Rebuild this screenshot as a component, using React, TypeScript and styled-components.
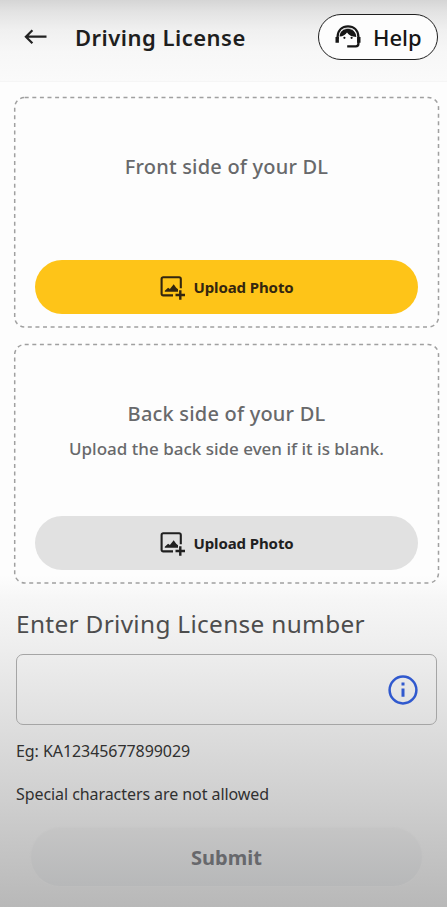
import React from "react";
import styled, { createGlobalStyle } from "styled-components";

const GlobalStyle = createGlobalStyle`
  *, *::before, *::after { box-sizing: border-box; }
  body {
    margin: 0;
    background: #fdfdfd;
    font-family: "Noto Sans", "Open Sans", sans-serif;
  }
  button, input { font-family: inherit; }
`;

const Screen = styled.div`
  width: 447px;
  height: 907px;
  overflow: hidden;
  display: flex;
  flex-direction: column;
  background: linear-gradient(
    180deg,
    #fdfdfd 0,
    #fdfdfd 575px,
    #f6f6f6 600px,
    #eeeeee 645px,
    #dedede 725px,
    #cecece 805px,
    #c0c0c0 870px,
    #b8b8b8 907px
  );
`;

const Header = styled.header`
  height: 82px;
  flex: none;
  display: flex;
  align-items: flex-start;
  padding: 14px 9px 0 24px;
  background: linear-gradient(180deg, #d5d5d5 0, #e3e3e3 12px, #f0f0f0 30px, #f7f7f7 52px, #fafafa 82px);
  border-bottom: 1px solid #f5f5f5;
`;

const BackButton = styled.button`
  width: 24px;
  height: 45px;
  padding: 0;
  border: 0;
  background: none;
  display: flex;
  align-items: center;
`;

const Title = styled.h1`
  margin: 0 0 0 27px;
  flex: 1;
  font-size: 22px;
  line-height: 47px;
  font-weight: 600;
  letter-spacing: 0.48px;
  color: #1e1e1e;
  white-space: nowrap;
`;

const HelpButton = styled.button`
  width: 120px;
  height: 46px;
  padding: 0 0 0 16px;
  display: flex;
  align-items: center;
  gap: 12px;
  border: 1.6px solid #202020;
  border-radius: 23px;
  background: #fdfdfd;
  color: #161616;
  font-size: 22px;
  font-weight: 500;
  line-height: 30px;
`;

const Main = styled.main`
  display: flex;
  flex-direction: column;
  padding: 15px 9px 0 14px;
`;

const Card = styled.section<{ $height: number; $top: number }>`
  position: relative;
  height: ${(p) => p.$height}px;
  padding: ${(p) => p.$top}px 21px 13px;
  display: flex;
  flex-direction: column;
  align-items: center;
  & + & { margin-top: 17px; }
`;

const Outline = styled.svg`
  position: absolute;
  inset: 0;
  width: 100%;
  height: calc(100% - 0.5px);
  pointer-events: none;
  overflow: visible;
`;

const CardTitle = styled.h2`
  margin: 0;
  padding-left: 1px;
  font-size: 20px;
  line-height: 30px;
  font-weight: 500;
  letter-spacing: 0.2px;
  color: #68696b;
  white-space: nowrap;
`;

const CardNote = styled.p`
  margin: 8px 0 0;
  padding-left: 1px;
  font-size: 17px;
  line-height: 24px;
  font-weight: 500;
  color: #68696b;
  white-space: nowrap;
`;

const UploadButton = styled.button<{ $primary?: boolean }>`
  width: 383px;
  height: 54px;
  margin-top: auto;
  padding: 0 0 0 2px;
  display: flex;
  align-items: center;
  justify-content: center;
  gap: 8px;
  border: 0;
  border-radius: 27px;
  background: ${(p) => (p.$primary ? "#fec418" : "#e1e1e1")};
  color: ${(p) => (p.$primary ? "#33260f" : "#202020")};
  font-size: 15px;
  font-weight: 700;
  letter-spacing: -0.1px;
  line-height: 22px;
`;

const Form = styled.form`
  display: flex;
  flex-direction: column;
  padding: 23px 0 0 2px;
`;

const Label = styled.label`
  font-size: 24.4px;
  line-height: 36px;
  letter-spacing: 0.32px;
  color: #4d4d4d;
  white-space: nowrap;
`;

const Field = styled.div`
  height: 71px;
  width: 421px;
  margin-top: 12px;
  padding-right: 18px;
  display: flex;
  align-items: center;
  border: 1.5px solid #a5a5a5;
  border-radius: 7px;
  background: rgba(255, 255, 255, 0.05);
`;

const Input = styled.input`
  flex: 1;
  min-width: 0;
  height: 100%;
  padding: 0 16px;
  border: 0;
  outline: 0;
  background: none;
  font-size: 20px;
`;

const Hint = styled.p<{ $gap: number }>`
  margin: ${(p) => p.$gap}px 0 0;
  font-size: 16px;
  line-height: 22px;
  letter-spacing: -0.07px;
  color: #303030;
  white-space: nowrap;
`;

const SubmitButton = styled.button`
  width: 391px;
  height: 58px;
  margin: 23px 0 0 15px;
  padding: 2px 0 0;
  border: 0;
  border-radius: 29px;
  background: linear-gradient(180deg, #c5c5c5, #b7b8b9);
  box-shadow: 0 0 2px #c0c0c0;
  color: #67686c;
  font-size: 20px;
  font-weight: 700;
  line-height: 28px;
`;

const DashedOutline = () => (
  <Outline aria-hidden="true">
    <rect
      x="0.7"
      y="0.5"
      width="423.8"
      height="100%"
      rx="10"
      fill="none"
      stroke="#a0a0a0"
      strokeWidth="1.5"
      strokeDasharray="4 3.6"
    />
  </Outline>
);

const ArrowIcon = () => (
  <svg width="24" height="20" viewBox="0 0 24 20" fill="none" stroke="#222" strokeWidth="2.2">
    <path d="M22.5 9.7H2.5M8.4 3.2 1.9 9.7 8.4 16.2" />
  </svg>
);

const AgentIcon = () => (
  <svg width="26" height="24" viewBox="0 0 26 24" fill="none" stroke="#161616">
    <path d="M2.6 14v-2.4C3 5 7.2 1.4 13 1.4S23 5 23.4 11.6v7.2c0 1.8-.8 2.6-2.6 2.6h-8.6" strokeWidth="2.3" />
    <path d="M2.2 12v5.8M23.8 12v5.8" strokeWidth="3.4" />
    <path
      d="M12.8 3.8c-4.7 0-8.2 3.3-8.2 7.8 3.4-.4 6-1.8 7.4-4.2 1.8 2.6 4.8 4.3 9.3 4.5-.2-4.9-3.8-8.1-8.5-8.1Z"
      fill="#161616"
      stroke="none"
    />
    <path d="M7.2 5.2C10 2.9 16 2.9 18.8 5.2" stroke="#b5b5b5" strokeWidth="0.8" />
    <circle cx="9.4" cy="12.8" r="1.1" fill="#161616" stroke="none" />
    <circle cx="16.6" cy="12.8" r="1.1" fill="#161616" stroke="none" />
  </svg>
);

const PhotoPlusIcon = () => (
  <svg width="25" height="25" viewBox="0 0 25 25" fill="none" stroke="currentColor" strokeWidth="2.1">
    <path d="M13 20.4H3.2a1.6 1.6 0 0 1-1.6-1.6V3.9a1.6 1.6 0 0 1 1.6-1.6h16a1.6 1.6 0 0 1 1.6 1.6v9.4" />
    <path d="M4.8 16.8v-1l3.3-3.1 1.8 1.4 3.8-4.8 2.5 3.4 1.8 1.6v2.5Z" fill="currentColor" stroke="none" />
    <path d="M20.3 15.2v9.6M15.5 20h9.6" strokeWidth="2.4" />
  </svg>
);

const InfoIcon = () => (
  <svg width="30" height="30" viewBox="0 0 30 30" fill="none" stroke="#3059ce">
    <circle cx="15" cy="15" r="13.4" strokeWidth="2.5" />
    <path d="M15 13.5v8.3M15 7.6v2.8" strokeWidth="3" />
  </svg>
);

export default function App() {
  return (
    <>
      <GlobalStyle />
      <Screen>
        <Header>
          <BackButton aria-label="Back">
            <ArrowIcon />
          </BackButton>
          <Title>Driving License</Title>
          <HelpButton>
            <AgentIcon />
            Help
          </HelpButton>
        </Header>
        <Main>
          <Card $height={230} $top={55}>
            <DashedOutline />
            <CardTitle>Front side of your DL</CardTitle>
            <UploadButton $primary>
              <PhotoPlusIcon />
              Upload Photo
            </UploadButton>
          </Card>
          <Card $height={239} $top={55}>
            <DashedOutline />
            <CardTitle>Back side of your DL</CardTitle>
            <CardNote>Upload the back side even if it is blank.</CardNote>
            <UploadButton>
              <PhotoPlusIcon />
              Upload Photo
            </UploadButton>
          </Card>
          <Form onSubmit={(e: React.FormEvent) => e.preventDefault()}>
            <Label htmlFor="license-number">Enter Driving License number</Label>
            <Field>
              <Input id="license-number" />
              <InfoIcon />
            </Field>
            <Hint $gap={15}>Eg: KA12345677899029</Hint>
            <Hint $gap={21}>Special characters are not allowed</Hint>
            <SubmitButton disabled>Submit</SubmitButton>
          </Form>
        </Main>
      </Screen>
    </>
  );
}
